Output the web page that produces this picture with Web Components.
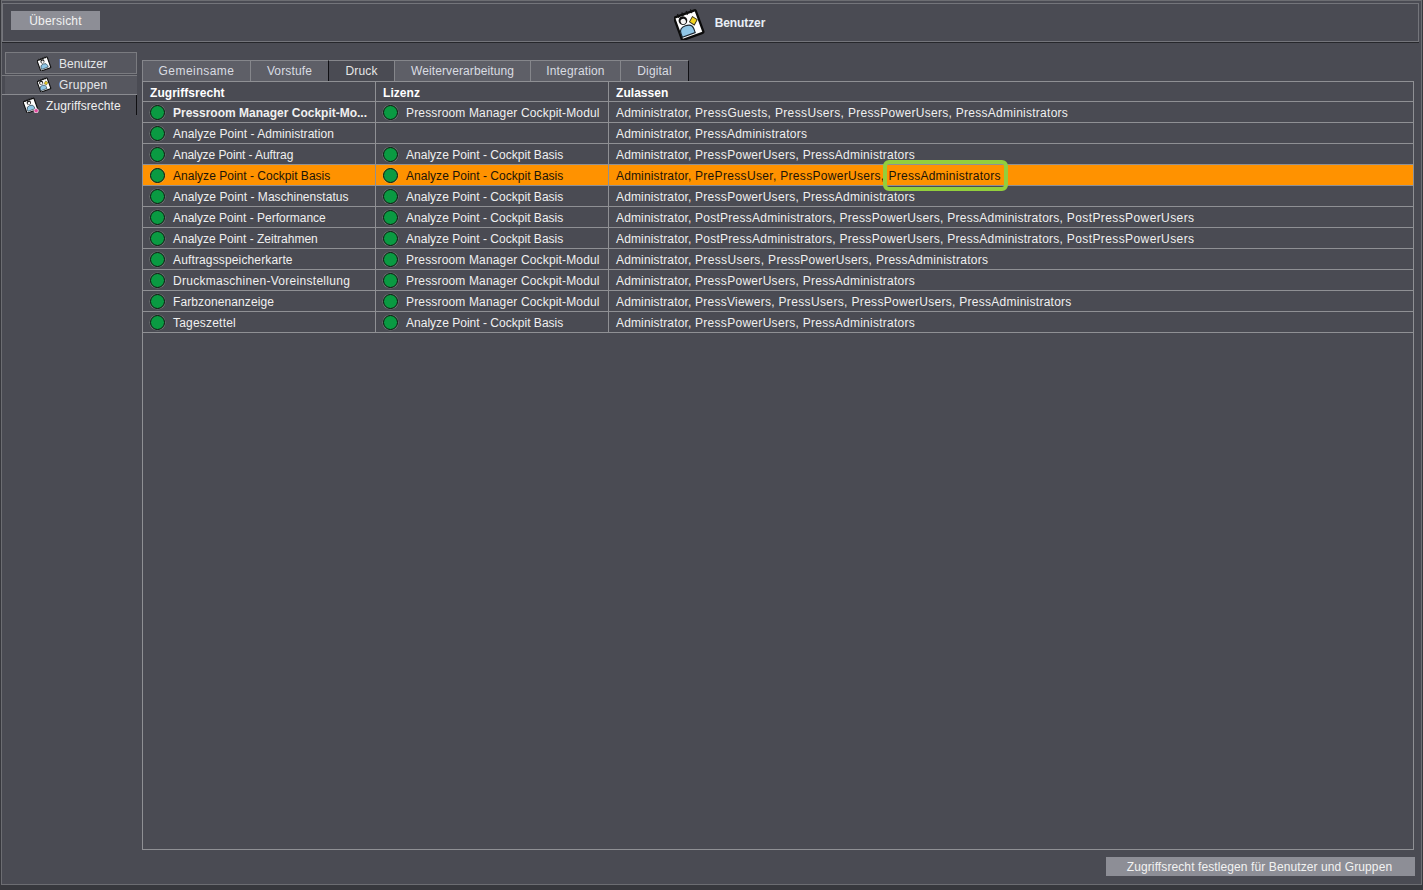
<!DOCTYPE html>
<html lang="de"><head><meta charset="utf-8"><title>Benutzer</title>
<style>
html,body{margin:0;padding:0;height:890px;overflow:hidden;background:#37383d}
body{font:12px "Liberation Sans",Arial,sans-serif;color:#fff}
</style></head><body>
<app-shell>
  <app-header slot="header" title-text="Benutzer"><flat-button ls=".2">Übersicht</flat-button></app-header>
  <side-nav slot="side">
    <nav-item icon="user" state="a" gap="7" pad="31" ls="0">Benutzer</nav-item>
    <nav-item icon="group" state="b" gap="7" pad="35" ls=".25">Gruppen</nav-item>
    <nav-item icon="rights" state="c" gap="7" pad="18" ls=".12">Zugriffsrechte</nav-item>
  </side-nav>
  <tab-bar slot="tabs">
    <tab-item w="108" ls=".45">Gemeinsame</tab-item><tab-item w="78">Vorstufe</tab-item><tab-item w="66" selected>Druck</tab-item><tab-item w="136" ls=".1">Weiterverarbeitung</tab-item><tab-item w="90">Integration</tab-item><tab-item w="68">Digital</tab-item>
  </tab-bar>
  <perm-table slot="table">
    <perm-row head a="Zugriffsrecht" b="Lizenz" c="Zulassen"></perm-row>
    <perm-row strong a="Pressroom Manager Cockpit-Mo..." b="Pressroom Manager Cockpit-Modul" c="Administrator, PressGuests, PressUsers, PressPowerUsers, PressAdministrators"></perm-row>
    <perm-row a="Analyze Point - Administration" c="Administrator, PressAdministrators"></perm-row>
    <perm-row a="Analyze Point - Auftrag" b="Analyze Point - Cockpit Basis" c="Administrator, PressPowerUsers, PressAdministrators"></perm-row>
    <perm-row selected a="Analyze Point - Cockpit Basis" b="Analyze Point - Cockpit Basis" c="Administrator, PrePressUser, PressPowerUsers," mark="PressAdministrators"></perm-row>
    <perm-row a="Analyze Point - Maschinenstatus" b="Analyze Point - Cockpit Basis" c="Administrator, PressPowerUsers, PressAdministrators"></perm-row>
    <perm-row a="Analyze Point - Performance" b="Analyze Point - Cockpit Basis" c="Administrator, PostPressAdministrators, PressPowerUsers, PressAdministrators, PostPressPowerUsers"></perm-row>
    <perm-row a="Analyze Point - Zeitrahmen" b="Analyze Point - Cockpit Basis" c="Administrator, PostPressAdministrators, PressPowerUsers, PressAdministrators, PostPressPowerUsers"></perm-row>
    <perm-row a="Auftragsspeicherkarte" b="Pressroom Manager Cockpit-Modul" c="Administrator, PressUsers, PressPowerUsers, PressAdministrators"></perm-row>
    <perm-row a="Druckmaschinen-Voreinstellung" b="Pressroom Manager Cockpit-Modul" c="Administrator, PressPowerUsers, PressAdministrators"></perm-row>
    <perm-row a="Farbzonenanzeige" b="Pressroom Manager Cockpit-Modul" c="Administrator, PressViewers, PressUsers, PressPowerUsers, PressAdministrators"></perm-row>
    <perm-row a="Tageszettel" b="Analyze Point - Cockpit Basis" c="Administrator, PressPowerUsers, PressAdministrators"></perm-row>
  </perm-table>
  <flat-button slot="action" wide ls=".1">Zugriffsrecht festlegen für Benutzer und Gruppen</flat-button>
</app-shell>
<script>
function def(name, css, html){
  customElements.define(name, class extends HTMLElement{
    constructor(){super();this.attachShadow({mode:'open'});}
    connectedCallback(){
      const h = typeof html==='function'?html(this):html;
      this.shadowRoot.innerHTML='<style>'+css+'</style>'+h;
    }
  });
}
const F='"Liberation Sans",Arial,sans-serif';
/* per-string tracking: the reference uses hinted integer advances */
const LS={
  'Administrator':.15,'PressAdministrators':.26,'PressPowerUsers':.3,'PostPressAdministrators':.26,
  'PressGuests':.35,'PressUsers':.37,'PressViewers':.26,'PrePressUser':.33,'PostPressPowerUsers':.4,
  'Analyze Point - Administration':.05,'Analyze Point - Auftrag':-.08,'Analyze Point - Cockpit Basis':.02,
  'Analyze Point - Maschinenstatus':.05,'Analyze Point - Performance':0,'Analyze Point - Zeitrahmen':0,
  'Auftragsspeicherkarte':.14,'Druckmaschinen-Voreinstellung':.29,'Farbzonenanzeige':.1,'Tageszettel':.2,
  'Pressroom Manager Cockpit-Modul':.16,'Pressroom Manager Cockpit-Mo...':0
};
const tracked=t=>`<span style="letter-spacing:${LS[t]??.05}px">${t}</span>`;
const trackedList=t=>t.split(/(?<=,) /).map((p,i,arr)=>{
  const k=p.replace(/,$/,'');
  return `<span style="letter-spacing:${LS[k]??.05}px;white-space:pre">${p}${i<arr.length-1?' ':''}</span>`;
}).join('');
function figure(kind){
  const person=(x,y)=>`<circle cx="${x}" cy="${y}" r="3.8" fill="#111"/><ellipse cx="${x}" cy="${y+.8}" rx="2.3" ry="2.4" fill="#f4f4f4"/>`;
  const body=(x,y,w)=>`<path d="M${x-w} 23v-3.5q0-5 ${w}-5t${w} 5V23z" fill="#8fc6e6" stroke="#1a2630" stroke-width="1"/>`;
  const fig = {
    user:person(12,9.5)+body(12,15,6.5),
    group:person(9.5,9.5)+body(10,15,6)+'<path d="M14.5 12.5l4-3.5 3 4-4 3.5z" fill="#f2d31e" stroke="#33301a" stroke-width=".8"/>',
    rights:person(12,9.5)+body(12,15,6.5)
  }[kind];
  return '<g transform="rotate(-20 13 15)"><rect x="3" y="4.5" width="20" height="21" rx="1" fill="#fff" stroke="#0c0c0c" stroke-width="2"/><path d="M7 2.5v3.5M11 2.5v3.5M15 2.5v3.5M19 2.5v3.5" stroke="#111" stroke-width="1.1"/>'+fig+'</g>'+(kind==='rights'?'<circle cx="23" cy="24" r="3.8" fill="#e0489c" stroke="#f5f5f5" stroke-width="1.3"/>':'');
}
def('doc-icon',':host{display:inline-block;flex:none;line-height:0}',
  e=>{const s=e.getAttribute('size')||16;return `<svg width="${s}" height="${s}" viewBox="0 0 28 28">${figure(e.getAttribute('kind')||'user')}</svg>`;});
def('status-dot',`:host{display:inline-block;flex:none;width:15px;height:15px;box-sizing:border-box;border-radius:50%;background:#0a9a42;border:1.5px solid #0a140d;box-shadow:0 0 0 .6px rgba(170,185,170,.4)}`,'');
def('flat-button',`:host{display:block;box-sizing:border-box;width:89px;height:19px;background:#8d8e96;color:#f2f2f2;font:12px ${F};text-align:center;line-height:21px;overflow:hidden}
:host([wide]){width:309px;padding-right:2px}`,e=>`<style>:host{letter-spacing:${e.getAttribute('ls')||0}px}</style><slot></slot>`);
def('app-header',`:host{display:flex;box-sizing:border-box;height:39px;margin:2px 2px 0 0;border:1px solid #74757b;align-items:flex-start;padding:7px 0 0 8px;box-shadow:0 1px 0 #26272b}
.t{flex:1;display:flex;justify-content:center;align-items:center;gap:9px;margin-top:-5px;height:35px;font:bold 12px ${F};letter-spacing:-.1px;color:#e8eef5;padding-right:79px}
.t span{margin-top:-2px}`,
  e=>`<slot></slot><div class="t"><doc-icon kind="group" size="32"></doc-icon><span>${e.getAttribute('title-text')}</span></div>`);
def('side-nav',`:host{display:flex;flex-direction:column;width:132px;margin-left:3px;margin-top:10px;flex:none}`,'<slot></slot>');
def('nav-item',`:host{display:flex;box-sizing:border-box;align-items:center;color:#e4e6ea;font:12px ${F}}
:host([state=a]){height:22px;background:#56575f;border:1px solid #7a7b80;margin-bottom:1px}
:host([state=b]){height:20px;margin-left:-3px;background:linear-gradient(#7a7b80,#7a7b80) top/100% 1px no-repeat,linear-gradient(#56575f,#56575f) 3px 0/100% 100% no-repeat;border-bottom:1px solid #8a8b90}
:host([state=c]){height:20px;border-right:1px solid #0f0f12;color:#f0f0f0}
.in{display:flex;align-items:center}
.tx{padding-top:1px}
:host([state=b]) .tx{padding-top:0}`,
  e=>`<div class="in" style="gap:${e.getAttribute('gap')}px;padding-left:${e.getAttribute('pad')}px"><doc-icon kind="${e.getAttribute('icon')}" size="${e.getAttribute('icon')==='rights'?16:15}"></doc-icon><span class="tx" style="letter-spacing:${e.getAttribute('ls')}px"><slot></slot></span></div>`);
def('tab-bar',`:host{display:flex;height:21px;gap:0}`,'<slot></slot>');
def('tab-item',`:host{display:block;box-sizing:border-box;height:21px;background:#5e5f67;border-top:1px solid #85868b;border-left:1px solid #85868b;border-right:1px solid #101014;color:#d9dce2;font:12px ${F};text-align:center;line-height:20px}
:host([selected]){background:#4a4b53;color:#e6e6e6;border-left-color:#101014}`,
  e=>`<style>:host{width:${+e.getAttribute('w')+1}px;margin-right:-1px;letter-spacing:${e.getAttribute('ls')||.15}px}</style><slot></slot>`);
def('perm-table',`:host{display:block;box-sizing:border-box;height:769px;border:1px solid #8f9094;background:#4a4b53}`,'<slot></slot>');
def('perm-row',`:host{display:grid;grid-template-columns:233px 233px 1fr;box-sizing:border-box;height:21px;border-bottom:1px solid #8f9094;color:#f0f0f0;font:12px ${F};white-space:nowrap}
:host([selected]){background:#ff9200;color:#1c1408}
:host([head]){height:20px;font-weight:bold;color:#fff;letter-spacing:.05px}
:host([strong]) .a{font-weight:bold}
.c{display:flex;align-items:center;gap:8px;padding-left:7px;border-right:1px solid #8f9094;overflow:hidden}
.c>span{padding-top:2px}
.c:last-child{border-right:0}
.m{position:relative;margin-left:-4px;letter-spacing:.26px}
.m::after{content:"";position:absolute;left:-5px;right:-7px;top:-7px;bottom:-8px;border:4px solid #93cf3c;border-radius:6px}
.w{overflow:visible}`,
  e=>{
    const head=e.hasAttribute('head'),a=e.getAttribute('a'),b=e.getAttribute('b'),c=e.getAttribute('c'),m=e.getAttribute('mark');
    const dot=head?'':'<status-dot></status-dot>';
    if(head) return `<div class="c a"><span>${a}</span></div><div class="c"><span>${b}</span></div><div class="c w"><span>${c}</span></div>`;
    return `<div class="c a">${dot}${tracked(a)}</div><div class="c">${b?dot+tracked(b):''}</div><div class="c w"><span>${trackedList(c)}</span>${m?`<span class="m">${m}</span>`:''}</div>`;
  });
def('app-shell',`:host{display:flex;flex-direction:column;box-sizing:border-box;width:1421px;height:885px;margin-left:1px;background:#4a4b53;border:1px solid #6c6d72}
.body{display:flex;flex:1;min-height:0}
.main{flex:1;display:flex;flex-direction:column;padding:18px 7px 0 5px;min-width:0}
.foot{display:flex;justify-content:flex-end;margin-top:7px;margin-right:-1px}`,
  `<slot name="header"></slot><div class="body"><slot name="side"></slot><div class="main"><slot name="tabs"></slot><slot name="table"></slot><div class="foot"><slot name="action"></slot></div></div></div>`);
</script>
</body></html>
